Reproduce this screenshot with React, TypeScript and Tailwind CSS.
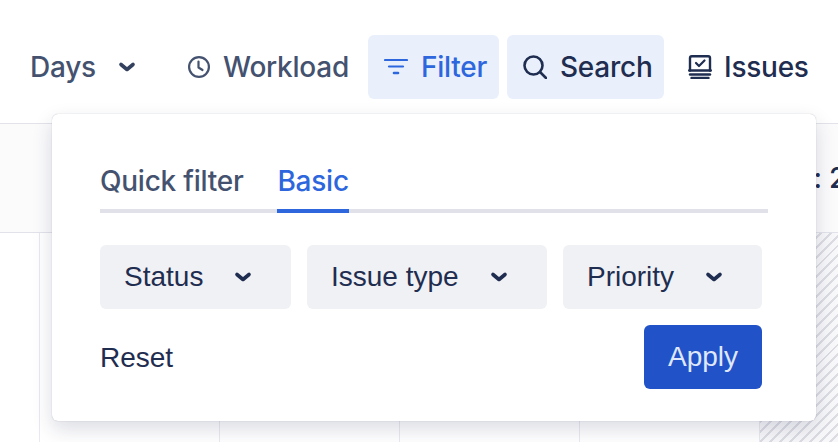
import React from "react";

const Chevron = () => (
  <svg width="18" height="18" viewBox="0 0 18 18" fill="none" stroke="currentColor" strokeWidth="3.6" strokeLinecap="round" strokeLinejoin="round">
    <path d="M3 6.5 9 11.5 15 6.5" />
  </svg>
);

const Clock = () => (
  <svg width="22" height="22" viewBox="0 0 22 22" fill="none" stroke="currentColor" strokeWidth="2.2" strokeLinecap="round" strokeLinejoin="round">
    <circle cx="11" cy="11" r="9.9" />
    <path d="M10.5 5.5V11.5L14.5 14" />
  </svg>
);

const FilterIcon = () => (
  <svg width="24" height="24" viewBox="0 0 24 24" fill="none" stroke="currentColor" strokeWidth="2.2" strokeLinecap="round">
    <path d="M1 5H23" />
    <path d="M5 11.5H19" />
    <path d="M10 18H14" strokeWidth="2.6" />
  </svg>
);

const SearchIcon = () => (
  <svg width="24" height="24" viewBox="0 0 24 24" fill="none" stroke="currentColor" strokeWidth="2.6" strokeLinecap="round">
    <circle cx="10.5" cy="10.5" r="9" />
    <path d="M17 17 23 23" />
  </svg>
);

const IssuesIcon = () => (
  <svg width="24" height="24" viewBox="0 0 24 24" fill="none" stroke="currentColor" strokeWidth="2.4" strokeLinecap="round" strokeLinejoin="round">
    <path d="M2 15.5V3Q2 1.2 3.8 1.2H20.2Q22 1.2 22 3V15.5" />
    <path d="M8 8 11 11 16.5 5.5" strokeWidth="2.2" />
    <path d="M1.2 15.5H22.8" />
    <path d="M2 19.5H22" />
    <path d="M3.5 23H20.5" />
  </svg>
);

const Dropdown = ({ label, className }: { label: string; className: string }) => (
  <div className={`flex h-16 items-center justify-between rounded-md bg-[#f0f1f4] pl-6 pr-[39px] font-['Liberation_Sans',sans-serif] tracking-normal text-[#1f2d50] ${className}`}>
    <span>{label}</span>
    <Chevron />
  </div>
);

export default function App() {
  return (
    <div className="relative h-[442px] w-[838px] overflow-hidden bg-white font-['Inter',sans-serif] text-[28px] font-[450] leading-none tracking-[-0.25px]">
      {/* toolbar */}
      <div className="flex h-[124px] items-start border-b border-[#e2e3ea] pt-[35px]">
        <div className="ml-[30px] flex h-16 w-[106px] items-center justify-between text-[#44526f]">
          <span>Days</span>
          <span className="text-[#33415f]"><Chevron /></span>
        </div>
        <div className="ml-[52px] flex h-16 w-[180px] items-center gap-[13px] text-[#44526f]">
          <Clock />
          <span>Workload</span>
        </div>
        <div className="flex h-16 w-[131px] items-center gap-[13px] rounded-md bg-[#e9f0fc] pl-4 text-[#2d66dd]">
          <FilterIcon />
          <span>Filter</span>
        </div>
        <div className="ml-2 flex h-16 w-[157px] items-center gap-[13px] rounded-md bg-[#e9f0fc] pl-4 text-[#1f2d50]">
          <SearchIcon />
          <span>Search</span>
        </div>
        <div className="ml-6 flex h-16 items-center gap-3 text-[#1f2d50]">
          <IssuesIcon />
          <span>Issues</span>
        </div>
      </div>

      {/* timeline header */}
      <div className="flex h-[109px] items-center justify-end border-b border-[#e2e3ea] bg-[#fbfbfc] text-[#1f2d50]">
        <span className="mr-[-8px] whitespace-nowrap font-medium">: 2</span>
      </div>

      {/* timeline grid */}
      <div className="flex h-[209px]">
        <div className="w-10 border-r border-[#e9eaef]" />
        <div className="w-[180px] border-r border-[#e9eaef]" />
        <div className="w-[180px] border-r border-[#e9eaef]" />
        <div className="w-[180px] border-r border-[#e9eaef]" />
        <div className="w-[180px] border-r border-[#e9eaef]" />
        <div className="flex-1 bg-[repeating-linear-gradient(135deg,#dcdde3_0,#dcdde3_2px,#f8f8fa_2px,#f8f8fa_7px)]" />
      </div>

      {/* filter popover */}
      <div className="absolute left-[52px] top-[114px] h-[307px] w-[764px] rounded-md bg-white px-12 pt-12 shadow-[0_0_1px_rgba(30,40,80,0.35),0_8px_20px_rgba(30,40,80,0.16)]">
        <div className="relative flex h-[51px] gap-[34px] border-b-4 border-[#e0e1e9]">
          <div className="pt-[5px] text-[#44526f]">Quick filter</div>
          <div className="relative pt-[5px] text-[#2d66dd]">
            Basic
            <div className="absolute bottom-[-4px] left-0 h-1 w-full bg-[#2d66dd]" />
          </div>
        </div>
        <div className="mt-8 flex gap-4">
          <Dropdown label="Status" className="w-[191px]" />
          <Dropdown label="Issue type" className="w-[240px]" />
          <Dropdown label="Priority" className="w-[199px]" />
        </div>
        <div className="mt-4 flex w-[662px] items-center justify-between font-['Liberation_Sans',sans-serif] tracking-normal">
          <span className="mt-[2px] text-[#1f2d50]">Reset</span>
          <div className="flex h-16 w-[118px] items-center justify-center rounded-md bg-[#2152c8] text-[#dfe7fa]">Apply</div>
        </div>
      </div>
    </div>
  );
}
